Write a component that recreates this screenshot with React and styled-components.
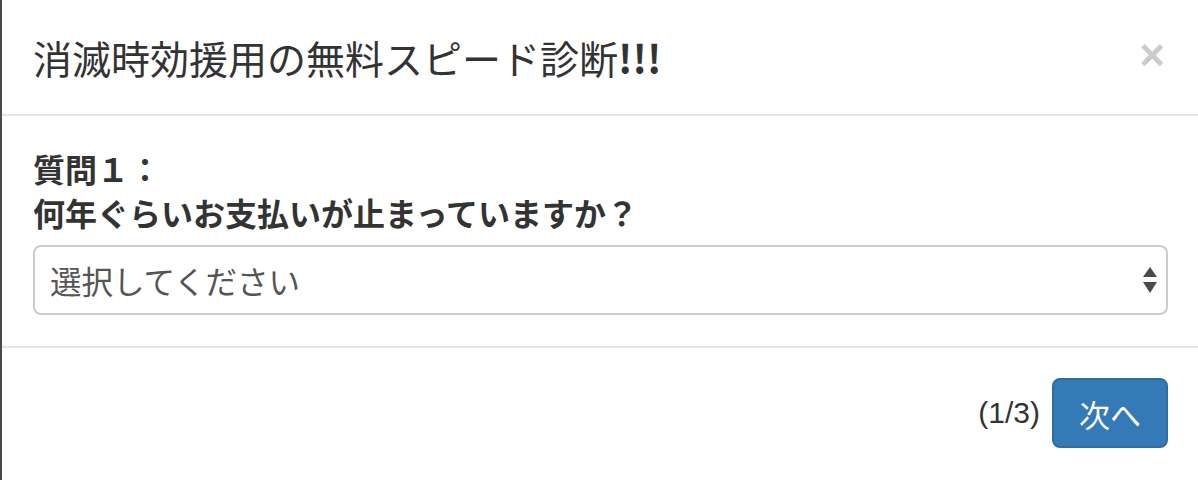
import React from 'react';
import styled, { createGlobalStyle } from 'styled-components';

const GlobalStyle = createGlobalStyle`
  html, body {
    margin: 0;
    background: #fff;
  }
  * {
    box-sizing: border-box;
  }
`

const jp = `"Noto Sans CJK JP", "Noto Sans", sans-serif`;

const Modal = styled.div`
  height: 480px;
  width: 1198px;
  border-left: 2px solid #4a4a4a;
  background: #fff;
  color: #333;
  font-family: ${jp};
`

const Header = styled.div`
  height: 116px;
  display: flex;
  align-items: center;
  justify-content: space-between;
  padding: 0 33px 0 31px;
  border-bottom: 2px solid #e5e5e5;
`

const Title = styled.h4`
  margin: 0;
  font-size: 39px;
  font-weight: 400;
  line-height: 1;
  color: #333;
`

const Bang = styled.span`
  font-weight: 700;
`

const Close = styled.button`
  background: none;
  border: 0;
  padding: 0;
  font-family: "Liberation Sans", Arial, sans-serif;
  font-size: 44px;
  font-weight: 700;
  line-height: 1;
  color: #000;
  opacity: 0.2;
  margin-top: -4px;
`

const Body = styled.div`
  height: 232px;
  padding: 30px 30px 0 31px;
  border-bottom: 2px solid #e5e5e5;
`

const Label = styled.label`
  display: block;
  font-size: 32px;
  font-weight: 700;
  line-height: 44px;
  margin-bottom: 11px;
`

const Select = styled.div`
  height: 70px;
  display: flex;
  align-items: center;
  justify-content: space-between;
  padding: 0 9px 0 15px;
  border: 2px solid #ccc;
  border-radius: 8px;
  font-size: 31.5px;
  color: #555;
`

const Footer = styled.div`
  display: flex;
  align-items: center;
  justify-content: flex-end;
  gap: 12px;
  padding: 30px 30px 30px 31px;
`

const Step = styled.span`
  font-family: "Liberation Sans", Arial, sans-serif;
  font-size: 30px;
  color: #333;
`

const NextButton = styled.button`
  width: 116px;
  height: 70px;
  background: #337ab7;
  border: 2px solid #2e6da4;
  border-radius: 8px;
  color: #fff;
  font-family: ${jp};
  font-size: 31px;
  padding: 0;
`

const Arrows = () => (
  <svg width="14" height="26" viewBox="0 0 14 26">
    <path d="M7 0 L14 10 L0 10 Z" fill="#4a4a4a" />
    <path d="M0 15 L14 15 L7 26 Z" fill="#4a4a4a" />
  </svg>
)

const App = () => (
  <>
    <GlobalStyle />
    <Modal>
      <Header>
        <Title>消滅時効援用の無料スピード診断<Bang>!!!</Bang></Title>
        <Close>×</Close>
      </Header>
      <Body>
        <Label>
          質問１：<br />
          何年ぐらいお支払いが止まっていますか？
        </Label>
        <Select>
          <span>選択してください</span>
          <Arrows />
        </Select>
      </Body>
      <Footer>
        <Step>(1/3)</Step>
        <NextButton>次へ</NextButton>
      </Footer>
    </Modal>
  </>
)

export default App;
